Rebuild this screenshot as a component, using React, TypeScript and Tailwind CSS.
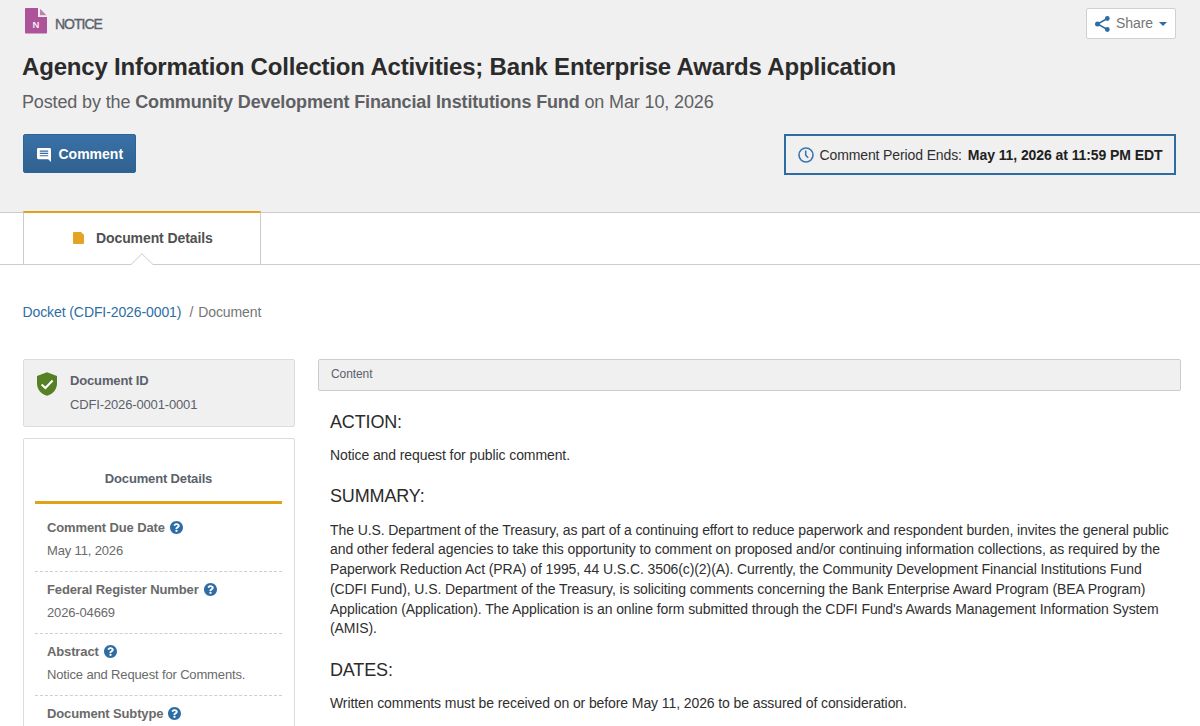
import type { ReactNode } from "react";

const details = [
  { label: "Comment Due Date", value: "May 11, 2026" },
  { label: "Federal Register Number", value: "2026-04669" },
  { label: "Abstract", value: "Notice and Request for Comments." },
  { label: "Document Subtype", value: "" },
];

const summary = [
  "The U.S. Department of the Treasury, as part of a continuing effort to reduce paperwork and respondent burden, invites the general public",
  "and other federal agencies to take this opportunity to comment on proposed and/or continuing information collections, as required by the",
  "Paperwork Reduction Act (PRA) of 1995, 44 U.S.C. 3506(c)(2)(A). Currently, the Community Development Financial Institutions Fund",
  "(CDFI Fund), U.S. Department of the Treasury, is soliciting comments concerning the Bank Enterprise Award Program (BEA Program)",
  "Application (Application). The Application is an online form submitted through the CDFI Fund's Awards Management Information System",
  "(AMIS).",
];

function NoticeIcon() {
  return (
    <div className="relative h-[26px] w-[22px]">
      <svg viewBox="0 0 22 26" className="h-[26px] w-[22px]">
        <path d="M1 0H13V9H22V24.4a1 1 0 0 1-1 1H1a1 1 0 0 1-1-1V1a1 1 0 0 1 1-1Z" fill="#ad5399" />
        <path d="M15 .8 21.5 7.2H15Z" fill="#c27fb3" />
      </svg>
      <span className="absolute left-0 top-[11px] w-[22px] text-center text-[9.5px] leading-[12px] font-bold text-[#f6eaf3]">N</span>
    </div>
  );
}

function ShareIcon() {
  return (
    <svg viewBox="0 0 15 16" className="h-4 w-[15px]" fill="#2e6da4">
      <path d="M12.3 2.5 2.6 8l9.7 5.5" fill="none" stroke="#2e6da4" strokeWidth="1.5" />
      <circle cx="12.3" cy="2.5" r="2.4" />
      <circle cx="2.5" cy="8" r="2.5" />
      <circle cx="12.3" cy="13.5" r="2.4" />
    </svg>
  );
}

function CommentIcon() {
  return (
    <svg viewBox="0 0 14 14" className="mt-[2px] h-3.5 w-3.5">
      <path d="M1.4 0H12.6A1.4 1.4 0 0 1 14 1.4V14L11.2 11.2H1.4A1.4 1.4 0 0 1 0 9.8V1.4A1.4 1.4 0 0 1 1.4 0Z" fill="#fff" />
      <path d="M2.8 3.1H11.2M2.8 5.4H11.2M2.8 7.7H11.2" stroke="#336a9f" strokeWidth="1.1" />
    </svg>
  );
}

function ClockIcon() {
  return (
    <svg viewBox="0 0 16 16" className="h-4 w-4" fill="none" stroke="#3a76ad" strokeWidth="1.6">
      <circle cx="8" cy="8" r="7" />
      <path d="M7.7 3.6V8.2L10.2 10.8" />
    </svg>
  );
}

function ShieldIcon() {
  return (
    <svg viewBox="0 0 20 24" className="-mt-[1px] h-6 w-5">
      <path d="M10 .3 20 4V11.5C20 17.3 16 22 10 23.8 4 22 0 17.3 0 11.5V4Z" fill="#558023" />
      <path d="M4.6 12.4 8.4 16 15.6 8.6" fill="none" stroke="#fff" strokeWidth="2.1" />
    </svg>
  );
}

function HelpIcon() {
  return (
    <svg viewBox="8 8 496 496" className="-mt-[1px] h-[13px] w-[13px]" fill="#2e6da4">
      <path d="M504 256c0 136.997-111.043 248-248 248S8 392.997 8 256C8 119.083 119.043 8 256 8s248 111.083 248 248zM262.655 90c-54.497 0-89.255 22.957-116.549 63.758-3.536 5.286-2.353 12.415 2.715 16.258l34.699 26.31c5.205 3.947 12.621 3.008 16.665-2.122 17.864-22.658 30.113-35.797 57.303-35.797 20.429 0 45.698 13.148 45.698 32.958 0 14.976-12.363 22.667-32.534 33.976C247.128 238.528 216 254.941 216 296v4c0 6.627 5.373 12 12 12h56c6.627 0 12-5.373 12-12v-1.333c0-28.462 83.186-29.647 83.186-106.667 0-58.002-60.165-102-116.531-102zM256 338c-25.365 0-46 20.635-46 46 0 25.364 20.635 46 46 46s46-20.636 46-46c0-25.365-20.635-46-46-46z" />
    </svg>
  );
}

function Heading({ children }: { children: ReactNode }) {
  return <h2 className="text-[18px] leading-5 tracking-[-0.15px] text-[#2b2b2b]">{children}</h2>;
}

export default function App() {
  return (
    <div className="flex h-[726px] w-[1200px] flex-col overflow-hidden bg-white font-['Liberation_Sans',Arial,sans-serif] text-[14px] tracking-[-0.095px] text-[#2f2f2f]">
      <header className="h-[213px] shrink-0 border-b border-[#cccccc] bg-[#f0f0f0] pr-6 pl-[22px]">
        <div className="flex justify-between pt-2">
          <div className="flex gap-2 pl-[3px]">
            <NoticeIcon />
            <span className="pt-2 text-[14px] leading-4 tracking-[-1px] text-[#5b616b] [-webkit-text-stroke:0.4px_#5b616b]">NOTICE</span>
          </div>
          <button className="flex h-[31px] w-[90px] items-center rounded-[2px] border border-[#d0d0d0] bg-white pl-2">
            <ShareIcon />
            <span className="-mt-[2px] ml-[6px] text-[14px] leading-4 text-[#757575]">Share</span>
            <svg viewBox="0 0 8 4" className="ml-[6px] h-1 w-2"><path d="M0 0H8L4 4Z" fill="#2e6da4" /></svg>
          </button>
        </div>
        <h1 className="mt-[13px] text-[24px] leading-[30px] font-bold tracking-[-0.18px] whitespace-nowrap text-[#2b2b2b]">
          Agency Information Collection Activities; Bank Enterprise Awards Application
        </h1>
        <p className="mt-[10px] text-[18px] leading-5 tracking-[-0.135px] whitespace-nowrap text-[#5f6063]">
          Posted by the <b>Community Development Financial Institutions Fund</b> on Mar 10, 2026
        </p>
        <div className="mt-[22px] flex items-start justify-between pl-[1px]">
          <button className="flex h-[39px] w-[113px] items-center rounded-[2px] border border-[#2b6499] bg-linear-to-b from-[#3971a7] to-[#30628f] pl-[13px]">
            <CommentIcon />
            <span className="ml-[7.5px] text-[14px] leading-4 font-bold tracking-normal text-white">Comment</span>
          </button>
          <div className="flex h-[41px] w-[392px] items-center border-2 border-[#2e6da4] pl-3 whitespace-nowrap">
            <ClockIcon />
            <span className="mt-[2px] ml-[5.5px] tracking-[-0.12px]">Comment Period Ends:</span>
            <b className="mt-[2px] ml-[6px] tracking-[-0.08px] text-[#212121]">May 11, 2026 at 11:59 PM EDT</b>
          </div>
        </div>
      </header>
      <nav className="h-[52px] shrink-0 border-b border-[#cccccc] pl-[23px]">
        <div className="relative -mt-[2px] flex h-[53px] w-[238px] items-center border-x border-t-2 border-x-[#cccccc] border-t-[#e0a11b] bg-white pl-[49px]">
          <svg viewBox="0 0 11 12" className="-mt-[2px] h-3 w-[11px]"><path d="M1 0H8L11 3V11a1 1 0 0 1-1 1H1a1 1 0 0 1-1-1V1a1 1 0 0 1 1-1Z" fill="#e5a323" /></svg>
          <span className="ml-3 font-bold text-[#4f5153]">Document Details</span>
          <svg viewBox="0 0 22 12" className="absolute -bottom-[1px] left-[107px] h-3 w-[22px]">
            <path d="M0 12V11.5L11 .8 22 11.5V12Z" fill="#fff" />
            <path d="M0 11.5 11 .8 22 11.5" fill="none" stroke="#ccc" />
          </svg>
        </div>
      </nav>
      <div className="mt-[39px] h-[17px] shrink-0 pl-[22.5px] leading-[17px] whitespace-pre text-[#757575]">
        <span className="text-[#2e6da4]">Docket (CDFI-2026-0001)</span>
        <span className="ml-2">/</span>
        <span className="ml-[5px]">Document</span>
      </div>
      <main className="mt-[38px] flex min-h-0 flex-1 gap-[23px] pl-[23px]">
        <aside className="flex w-[272px] shrink-0 flex-col gap-[11px] text-[13px] tracking-[-0.15px] text-[#6a6a6a]">
          <section className="flex h-[68px] shrink-0 gap-[13px] rounded-[2px] border border-[#dcdcdc] bg-[#f0f0f0] pt-[13px] pl-[13px]">
            <ShieldIcon />
            <div className="leading-4 text-[#5b616b]">
              <div className="font-bold">Document ID</div>
              <div className="mt-2">CDFI-2026-0001-0001</div>
            </div>
          </section>
          <section className="h-[400px] shrink-0 rounded-[2px] border border-[#dcdcdc] pr-3 pl-[11px]">
            <h3 className="mt-[32px] h-[33px] border-b-3 border-[#e0a11b] text-center leading-4 font-bold text-[#5b616b]">Document Details</h3>
            <div className="pt-[6px]">
              {details.map((d) => (
                <div key={d.label} className="h-[62px] border-b border-dashed border-[#cfcfcf] px-3 pt-[10px] leading-4 whitespace-nowrap">
                  <div className="flex items-center gap-[5px] font-bold tracking-[-0.13px]">{d.label}<HelpIcon /></div>
                  {d.value && <div className="mt-[7px]">{d.value}</div>}
                </div>
              ))}
            </div>
          </section>
        </aside>
        <article className="w-[863px] shrink-0">
          <div className="h-8 rounded-[2px] border border-[#cccccc] bg-[#f0f0f0] pt-[7px] pl-3 text-[12px] leading-[14px] text-[#5b616b]">Content</div>
          <div className="pt-[21px] pl-[12px]">
            <Heading>ACTION:</Heading>
            <p className="mt-[13px] leading-5">Notice and request for public comment.</p>
            <div className="mt-[21px]"><Heading>SUMMARY:</Heading></div>
            <p className="mt-[14.5px] leading-[19.75px] whitespace-nowrap">
              {summary.map((line) => <span key={line} className="block">{line}</span>)}
            </p>
            <div className="mt-[20.5px]"><Heading>DATES:</Heading></div>
            <p className="mt-[13.5px] leading-5">Written comments must be received on or before May 11, 2026 to be assured of consideration.</p>
          </div>
        </article>
      </main>
    </div>
  );
}
